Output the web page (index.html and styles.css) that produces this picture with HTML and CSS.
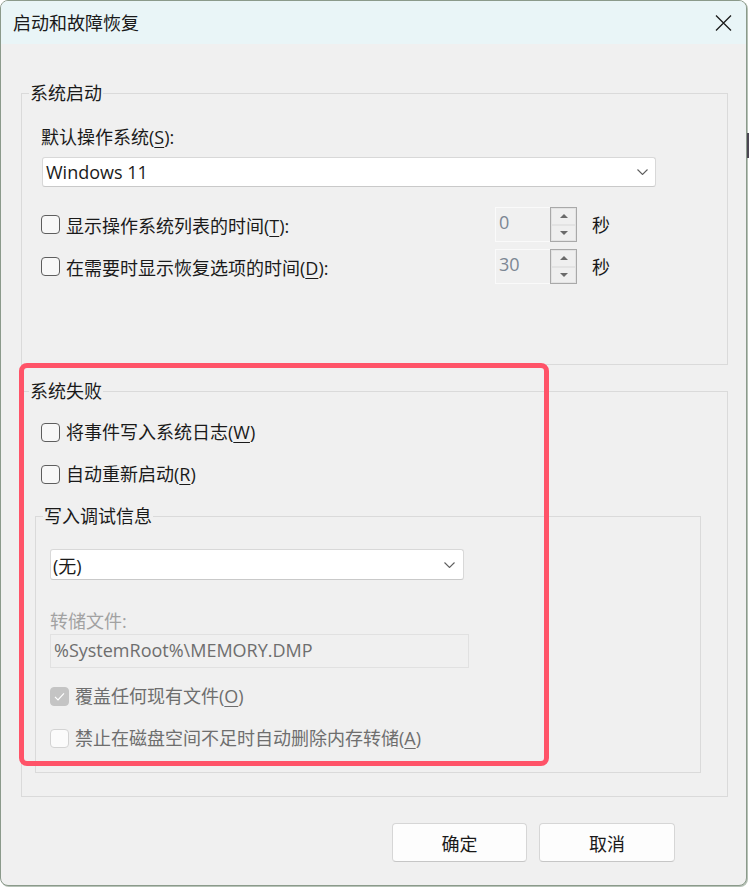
FILE: index.html
```html
<!DOCTYPE html>
<html lang="zh-CN">
<head>
<meta charset="utf-8">
<title>启动和故障恢复</title>
<link rel="stylesheet" href="styles.css">
</head>
<body>
<div class="window">
  <div class="titlebar">
    <span class="title">启动和故障恢复</span>
    <svg class="close" viewBox="0 0 17 16" width="17" height="16"><path d="M1 0.5 L16 15.5 M16 0.5 L1 15.5" stroke="#1b1b1b" stroke-width="1.3" fill="none"/></svg>
  </div>
  <div class="body">
    <section class="group g1">
      <div class="legend">系统启动</div>
      <div class="label l-os">默认操作系统(<u>S</u>):</div>
      <div class="select sel-os">
        <span>Windows 11</span>
        <svg class="chev" viewBox="0 0 11 6" width="11" height="6"><path d="M0.5 0.5 L5.5 5.5 L10.5 0.5" stroke="#5f5f5f" stroke-width="1.1" fill="none"/></svg>
      </div>
      <div class="opt-row r1">
        <span class="cb"></span>
        <span class="opt-text">显示操作系统列表的时间(<u>T</u>):</span>
        <div class="spin">
          <div class="spin-edit">0</div>
          <div class="spin-btns"><span class="sb"><i class="up"></i></span><span class="sb"><i class="dn"></i></span></div>
        </div>
        <span class="unit">秒</span>
      </div>
      <div class="opt-row r2">
        <span class="cb"></span>
        <span class="opt-text">在需要时显示恢复选项的时间(<u>D</u>):</span>
        <div class="spin">
          <div class="spin-edit">30</div>
          <div class="spin-btns"><span class="sb"><i class="up"></i></span><span class="sb"><i class="dn"></i></span></div>
        </div>
        <span class="unit">秒</span>
      </div>
    </section>

    <section class="group g2">
      <div class="legend">系统失败</div>
      <div class="check-row r-ev"><span class="cb"></span><span class="ct">将事件写入系统日志(<u>W</u>)</span></div>
      <div class="check-row r-rs"><span class="cb"></span><span class="ct">自动重新启动(<u>R</u>)</span></div>

      <section class="group g3">
        <div class="legend">写入调试信息</div>
        <div class="select sel-dbg">
          <span>(无)</span>
          <svg class="chev" viewBox="0 0 11 6" width="11" height="6"><path d="M0.5 0.5 L5.5 5.5 L10.5 0.5" stroke="#5f5f5f" stroke-width="1.1" fill="none"/></svg>
        </div>
        <div class="label l-dump">转储文件:</div>
        <div class="textbox">%SystemRoot%\MEMORY.DMP</div>
        <div class="check-row r-ow disabled">
          <span class="cb cb-checked"><svg viewBox="0 0 19 19" width="19" height="19"><path d="M5 9.8 L8 12.8 L14 6.3" stroke="#ffffff" stroke-width="1.2" fill="none"/></svg></span>
          <span class="ct">覆盖任何现有文件(<u>O</u>)</span>
        </div>
        <div class="check-row r-del disabled">
          <span class="cb cb-off"></span>
          <span class="ct">禁止在磁盘空间不足时自动删除内存转储(<u>A</u>)</span>
        </div>
      </section>
    </section>

    <div class="buttons">
      <button class="btn b-ok">确定</button>
      <button class="btn b-cancel">取消</button>
    </div>
  </div>
  <div class="annot"></div>
</div>
<div class="desk-sliver"></div>
</body>
</html>
```

FILE: styles.css
```css
* { box-sizing: border-box; }

html, body {
  margin: 0;
  padding: 0;
}

body {
  width: 749px;
  height: 887px;
  overflow: hidden;
  position: relative;
  background: #ffffff;
  font-family: "Open Sans", "Noto Sans CJK SC", sans-serif;
  font-size: 18px;
  color: #1a1a1a;
}

u { text-decoration-thickness: 1px; text-underline-offset: 3px; }

.window {
  width: 747px;
  height: 886px;
  border: 1px solid #8b9a8b;
  border-radius: 8px;
  background: #f0f0f0;
  overflow: hidden;
  position: relative;
  display: flex;
  flex-direction: column;
  box-shadow: 1px 1px 0 #b7c2b7;
}

.titlebar {
  flex: none;
  height: 43px;
  background: #e9f5f7;
  display: flex;
  align-items: center;
  justify-content: space-between;
  padding: 0 14px 0 12px;
}

.title { line-height: 24px; }

.close { display: block; margin-top: 1px; }

.body {
  display: flex;
  flex-direction: column;
  align-items: flex-start;
  padding-left: 20px;
}

.group {
  border: 1px solid #dadada;
  display: flex;
  flex-direction: column;
  align-items: flex-start;
}

.legend {
  margin: -11px 0 0 -12px;
  padding: 0 1px;
  background: #f0f0f0;
  height: 20px;
  line-height: 20px;
  white-space: nowrap;
}

.label {
  height: 24px;
  line-height: 24px;
  white-space: nowrap;
}

/* group 1 */
.g1 {
  width: 707px;
  height: 272px;
  margin-top: 49px;
  padding-left: 19px;
}

.l-os { margin-top: 22px; }

.select {
  background: #ffffff;
  border: 1px solid #d8d8d8;
  border-bottom-color: #c9c9c9;
  border-radius: 3px;
  display: flex;
  align-items: center;
  justify-content: space-between;
  white-space: nowrap;
}

.chev { display: block; }

.sel-os {
  margin: 8px 0 0 1px;
  width: 614px;
  height: 30px;
  padding: 0 7px 0 3px;
}

.opt-row {
  display: flex;
  align-items: center;
  height: 35px;
}

.r1 { margin-top: 20px; }
.r2 { margin-top: 7px; }

.cb {
  flex: none;
  width: 19px;
  height: 19px;
  border: 1px solid #5e5e5e;
  border-radius: 4px;
  background: #f8f8f8;
  display: block;
}

.opt-text {
  margin-left: 6px;
  width: 429px;
  white-space: nowrap;
}

.spin {
  display: flex;
  width: 82px;
  height: 35px;
}

.spin-edit {
  width: 55px;
  height: 35px;
  border: 1px solid #fafafa;
  border-right: none;
  padding-left: 3px;
  line-height: 29px;
  color: #7c8794;
}

.spin-btns {
  width: 27px;
  height: 35px;
  border: 1px solid #a9a9a9;
  display: flex;
  flex-direction: column;
}

.sb {
  flex: 1;
  border: 1px solid #e3e3e3;
  background: #efefef;
  display: flex;
  align-items: center;
  justify-content: center;
}

.up {
  width: 0; height: 0;
  border-left: 4px solid transparent;
  border-right: 4px solid transparent;
  border-bottom: 4px solid #6a6a6a;
}

.dn {
  width: 0; height: 0;
  border-left: 4px solid transparent;
  border-right: 4px solid transparent;
  border-top: 4px solid #6a6a6a;
}

.unit { margin-left: 15px; line-height: 24px; }

/* group 2 */
.g2 {
  width: 707px;
  margin-top: 26px;
  padding-left: 19px;
  padding-bottom: 23px;
}

.check-row {
  display: flex;
  align-items: center;
  height: 24px;
  white-space: nowrap;
}

.ct { margin-left: 6px; line-height: 24px; }

.r-ev { margin-top: 19px; }
.r-rs { margin-top: 18px; }

/* group 3 */
.g3 {
  width: 666px;
  margin: 30px 0 0 -6px;
  padding-left: 14px;
  padding-bottom: 22px;
}

.g3 .legend { margin-left: -7px; }

.sel-dbg {
  margin-top: 23px;
  width: 414px;
  height: 31px;
  padding: 0 8px 0 2px;
}

.l-dump {
  margin-top: 29px;
  color: #a2a2a2;
}

.textbox {
  margin-top: 1px;
  width: 419px;
  height: 34px;
  border: 1px solid #e1e1e1;
  background: #f0f0f0;
  color: #6e6e6e;
  padding-left: 3px;
  line-height: 30px;
  white-space: nowrap;
}

.disabled .ct { color: #6e6e6e; }

.r-ow { margin-top: 16px; }
.r-del { margin-top: 18px; }

.cb-checked {
  background: #c4c4c4;
  border-color: #c4c4c4;
}

.cb-checked svg {
  display: block;
  margin: -1px 0 0 -1px;
}

.cb-off {
  background: #fbfbfb;
  border-color: #d3d3d3;
}

/* buttons */
.buttons {
  display: flex;
  gap: 12px;
  margin: 26px 0 0 371px;
}

.btn {
  height: 39px;
  background: #fdfdfd;
  border: 1px solid #d6d6d6;
  border-bottom-color: #c6c6c6;
  border-radius: 4px;
  font-family: "Open Sans", "Noto Sans CJK SC", sans-serif;
  font-size: 18px;
  color: #1a1a1a;
  padding: 0;
}

.b-ok { width: 135px; }
.b-cancel { width: 136px; }

/* red highlight annotation drawn over the dialog */
.annot {
  position: absolute;
  left: 18px;
  top: 362px;
  width: 530px;
  height: 403px;
  border: 5px solid #ff5368;
  border-radius: 8px;
  pointer-events: none;
}

.desk-sliver {
  position: absolute;
  left: 747px;
  top: 133px;
  width: 2px;
  height: 25px;
  background: #4b4652;
}
```
